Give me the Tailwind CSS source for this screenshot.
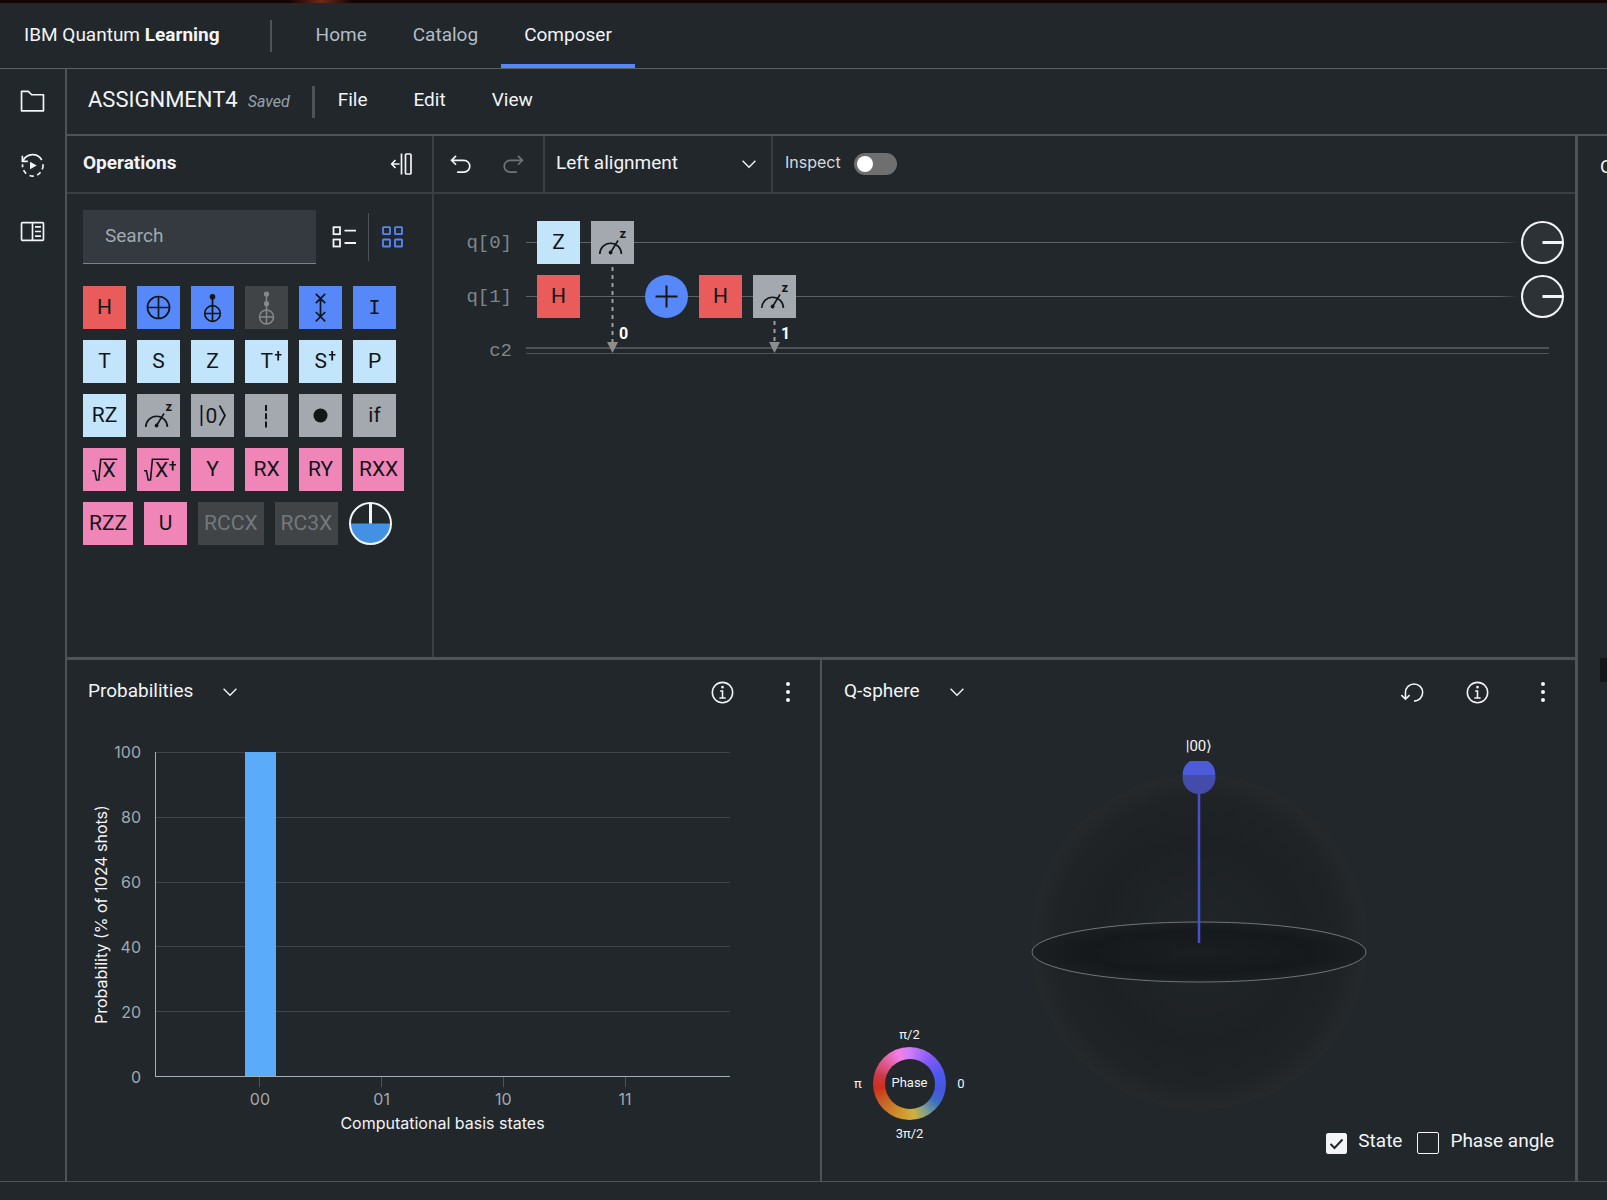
<!DOCTYPE html>
<html lang="en">
<head>
<meta charset="utf-8">
<meta name="viewport" content="width=device-width, initial-scale=1">
<title>IBM Quantum Learning - Composer</title>
<script src="https://cdn.jsdelivr.net/npm/@tailwindcss/browser@4"></script>
</head>
<body class="flex min-h-screen flex-col overflow-x-hidden bg-[#21272a] font-['Roboto',sans-serif] text-[19px] leading-6 text-[#f2f4f8]">

<!-- Shared icon and gate symbols -->
<svg class="hidden" aria-hidden="true">
  <symbol id="chevron" viewBox="0 0 16 16"><path fill="currentColor" d="M8 11 3 6l.7-.7L8 9.6l4.3-4.3.7.7z"/></symbol>
  <symbol id="info" viewBox="0 0 32 32"><path fill="currentColor" d="M17 22v-9h-4v2h2v7h-3v2h8v-2zM16 7.5a1.7 1.7 0 1 0 0 3.4 1.7 1.7 0 0 0 0-3.4z"/><circle cx="16" cy="16" r="13" fill="none" stroke="currentColor" stroke-width="2"/></symbol>
  <symbol id="dots" viewBox="0 0 22 22"><g fill="currentColor"><circle cx="11" cy="3" r="2"/><circle cx="11" cy="11" r="2"/><circle cx="11" cy="19" r="2"/></g></symbol>
  <symbol id="measure" viewBox="0 0 43 43"><g fill="none" stroke="#121619" stroke-width="1.6"><path d="M8.800 33a10.800 10.800 0 0 1 21.600 0M19.600 31.500 27 19.500"/></g><circle cx="19.600" cy="31.500" r="1.900" fill="#121619"/><text x="28.500" y="17" font-size="13" font-weight="700" fill="#121619">z</text></symbol>
  <symbol id="wheel" viewBox="0 0 43 43"><circle cx="21.500" cy="21.500" r="20.500" fill="#2c3236" stroke="#f2f4f8" stroke-width="2"/><path d="M21.500 21.500H41" stroke="#f2f4f8" stroke-width="3"/></symbol>
</svg>

<div class="h-1 border-b border-[#4a1512] bg-linear-to-r from-[#160504] from-18% via-[#6e2a1c] via-20% to-[#160504] to-22%"></div>

<header class="flex h-[65px] shrink-0 items-center border-b border-[#5a6165] pl-6">
  <a href="#" class="pb-0.5">IBM Quantum <b class="font-bold">Learning</b></a>
  <div class="ml-[50px] h-8 w-0.5 bg-[#4d5358]"></div>
  <nav class="ml-[21px] flex h-full text-[#b3bdc6]">
    <a href="#" class="px-[23px] pt-[19px]">Home</a>
    <a href="#" class="px-[23px] pt-[19px]">Catalog</a>
    <a href="#" aria-current="page" class="border-b-4 border-[#5688fa] px-[23px] pt-[19px] text-[#f2f4f8]">Composer</a>
  </nav>
</header>

<div class="flex flex-1 border-b border-[#4d5358]">
  <aside class="flex w-[67px] shrink-0 flex-col items-center gap-[37px] border-r-2 border-[#4d5358] pt-[19px]">
    <button aria-label="Files"><svg class="size-[27px]" viewBox="0 0 32 32"><path fill="none" stroke="#f2f4f8" stroke-width="2" stroke-linejoin="round" d="M3 4h8l4 4h14v19H3z"/></svg></button>
    <button aria-label="Jobs"><svg class="size-[27px]" viewBox="0 0 32 32"><g fill="none" stroke="#f2f4f8" stroke-width="2"><path d="M5 10a12.500 12.500 0 0 1 22-.500M4 4.500V11h6.500M28.500 14.500a12 12 0 0 1-1 6M25.500 24a12 12 0 0 1-4 3.300M17.500 28.500a12 12 0 0 1-5-.600M8.500 25.500a12 12 0 0 1-3-4M4.200 18v-3.500"/></g><path fill="#f2f4f8" d="M13 11.500v9l8-4.500z"/></svg></button>
    <button aria-label="Documentation" class="pt-0.5"><svg class="size-[27px]" viewBox="0 0 32 32"><g fill="none" stroke="#f2f4f8" stroke-width="2"><rect x="3" y="5.500" width="26" height="21" rx="1"/><path d="M16 5.500v21M19 10.500h7M19 16h7M19 21.500h7"/></g></svg></button>
  </aside>

  <main class="flex min-w-0 flex-1 flex-col">
    <div class="flex h-[67px] shrink-0 items-center border-b-2 border-[#4d5358] pl-[21px]">
      <h1 class="pb-1 text-[22px]">ASSIGNMENT4</h1>
      <span class="ml-2.5 text-base text-[#98a2aa] italic">Saved</span>
      <div class="ml-[22px] h-8 w-[3px] bg-[#4d5358]"></div>
      <button class="px-[23px] pb-1">File</button>
      <button class="px-[23px] pb-1">Edit</button>
      <button class="px-[23px] pb-1">View</button>
    </div>

    <div class="flex flex-1">
      <div class="grid min-w-0 flex-1 grid-rows-[524fr_521fr]">

        <div class="flex border-b-[3px] border-[#4d5358]">
          <!-- Operations palette -->
          <section class="w-[367px] shrink-0 border-r-2 border-[#393f43]">
            <div class="flex h-[58px] items-center justify-between border-b-2 border-[#393f43] pr-[18px] pl-4">
              <h2 class="pb-0.5 font-bold">Operations</h2>
              <button aria-label="Collapse operations"><svg class="size-6" viewBox="0 0 24 24"><g fill="none" stroke="#f2f4f8" stroke-width="1.700"><path d="M11.500 1.500v21M9.500 12H2M5.500 8 1.700 12l3.800 4"/><rect x="15.500" y="2" width="5.500" height="20" rx="1"/></g></svg></button>
            </div>
            <div class="flex items-center pt-4 pl-4">
              <input type="search" aria-label="Search operations" placeholder="Search" class="h-[54px] w-[233px] border-b border-[#7b8288] bg-[#343a3f] px-[22px] pb-0.5 placeholder:text-[#a2a9b0]">
              <button aria-label="List view" class="ml-4"><svg class="size-6" viewBox="0 0 24 24"><g fill="none" stroke="#f2f4f8" stroke-width="1.800"><rect x="1.500" y="2.200" width="6.500" height="7"/><rect x="1.500" y="14.500" width="6.500" height="7"/><path d="M12.500 5.700H24M12.500 18H24"/></g></svg></button>
              <div class="ml-3 h-12 w-px bg-[#4d5358]"></div>
              <button aria-label="Grid view" class="ml-3"><svg class="size-6" viewBox="0 0 24 24"><g fill="none" stroke="#5688fa" stroke-width="1.800"><rect x="2" y="2.200" width="7" height="7" rx=".6"/><rect x="2" y="14.500" width="7" height="7" rx=".6"/><rect x="14" y="2.200" width="7" height="7" rx=".6"/><rect x="14" y="14.500" width="7" height="7" rx=".6"/></g></svg></button>
            </div>
            <div class="flex flex-wrap gap-[11px] pt-[22px] pl-4 text-[21px] text-[#121619]">
              <button class="h-[43px] min-w-[43px] bg-[#e95c5b] px-1.5 pb-0.5">H</button>
              <button aria-label="NOT" class="size-[43px] bg-[#5688fa]"><svg viewBox="0 0 43 43"><g fill="none" stroke="#121619" stroke-width="1.700"><circle cx="21.500" cy="21.500" r="11"/><path d="M10.500 21.500h22M21.500 10.500v22"/></g></svg></button>
              <button aria-label="CNOT" class="size-[43px] bg-[#5688fa]"><svg viewBox="0 0 43 43"><g fill="none" stroke="#121619" stroke-width="1.700"><circle cx="21.500" cy="27.500" r="7.800"/><path d="M13.700 27.500h15.600M21.500 11v24.300"/></g><circle cx="21.500" cy="10.700" r="2.800" fill="#121619"/></svg></button>
              <button aria-label="Toffoli" disabled class="size-[43px] bg-[#404447]"><svg viewBox="0 0 43 43"><g fill="none" stroke="#85898b" stroke-width="1.500"><circle cx="21.500" cy="31" r="7"/><path d="M14.500 31h14M21.500 8v30"/></g><g fill="#85898b"><circle cx="21.500" cy="8" r="2.600"/><circle cx="21.500" cy="17.700" r="2.600"/></g></svg></button>
              <button aria-label="SWAP" class="size-[43px] bg-[#5688fa]"><svg viewBox="0 0 43 43"><path fill="none" stroke="#121619" stroke-width="1.700" d="M16.800 7.800l9.400 9.400M26.200 7.800l-9.400 9.400M16.800 26l9.400 9.400M26.200 26l-9.400 9.400M21.500 12.500v18"/></svg></button>
              <button class="h-[43px] min-w-[43px] bg-[#5688fa] px-1.5 pb-0.5 font-['DejaVu_Sans_Mono',monospace] text-[20px]">I</button>

              <button class="h-[43px] min-w-[43px] bg-[#c2e5fc] px-1.5 pb-0.5">T</button>
              <button class="h-[43px] min-w-[43px] bg-[#c2e5fc] px-1.5 pb-0.5">S</button>
              <button class="h-[43px] min-w-[43px] bg-[#c2e5fc] px-1.5 pb-0.5">Z</button>
              <button aria-label="T dagger" class="size-[43px] bg-[#c2e5fc]"><svg viewBox="0 0 43 43" fill="#121619"><text x="15.500" y="28" font-size="21">T</text><path d="M32.300 11h1.800v3h2.400v1.500h-2.400v5h-1.800v-5h-2.400V14h2.400z"/></svg></button>
              <button aria-label="S dagger" class="size-[43px] bg-[#c2e5fc]"><svg viewBox="0 0 43 43" fill="#121619"><text x="15.500" y="28" font-size="21">S</text><path d="M32.300 11h1.800v3h2.400v1.500h-2.400v5h-1.800v-5h-2.400V14h2.400z"/></svg></button>
              <button class="h-[43px] min-w-[43px] bg-[#c2e5fc] px-1.5 pb-0.5">P</button>

              <button class="h-[43px] min-w-[43px] bg-[#c2e5fc] px-1.5 pb-0.5">RZ</button>
              <button aria-label="Measurement" class="size-[43px] bg-[#a4a9b0]"><svg viewBox="0 0 43 43"><use href="#measure"/></svg></button>
              <button aria-label="Reset to zero" class="size-[43px] bg-[#a4a9b0]"><svg viewBox="0 0 43 43"><path fill="none" stroke="#121619" stroke-width="1.700" d="M10.500 11v21M28.500 11.500l5.500 10-5.500 10"/><text x="14.500" y="29" font-size="21" fill="#121619">0</text></svg></button>
              <button aria-label="Barrier" class="size-[43px] bg-[#a4a9b0]"><svg viewBox="0 0 43 43"><path stroke="#121619" stroke-width="2" stroke-dasharray="6 2.200" d="M21 11v22.500"/></svg></button>
              <button aria-label="Control modifier" class="size-[43px] bg-[#a4a9b0]"><svg viewBox="0 0 43 43"><circle cx="21.500" cy="21.500" r="7" fill="#121619"/></svg></button>
              <button class="h-[43px] min-w-[43px] bg-[#a4a9b0] px-1.5 pb-0.5">if</button>

              <button aria-label="Square root of X" class="size-[43px] bg-[#f086b7]"><svg viewBox="0 0 43 43"><path fill="none" stroke="#121619" stroke-width="1.600" d="M9.300 22.700h2.400L13.500 32h2.300l1.900-20.700h16.600"/><text x="19.500" y="29" font-size="21" fill="#121619">X</text></svg></button>
              <button aria-label="Square root of X dagger" class="size-[43px] bg-[#f086b7]"><svg viewBox="0 0 43 43"><path fill="none" stroke="#121619" stroke-width="1.600" d="M7 22.700h2.400L11.200 32h2.300l1.900-20.700h16.400"/><text x="18" y="29" font-size="21" fill="#121619">X</text><path fill="#121619" d="M34.800 13h1.800v3h2.400v1.500h-2.400v5h-1.800v-5h-2.400V16h2.400z"/></svg></button>
              <button class="h-[43px] min-w-[43px] bg-[#f086b7] px-1.5 pb-0.5">Y</button>
              <button class="h-[43px] min-w-[43px] bg-[#f086b7] px-1.5 pb-0.5">RX</button>
              <button class="h-[43px] min-w-[43px] bg-[#f086b7] px-1.5 pb-0.5">RY</button>
              <button class="h-[43px] min-w-[43px] bg-[#f086b7] px-1.5 pb-0.5">RXX</button>

              <button class="h-[43px] min-w-[43px] bg-[#f086b7] px-1.5 pb-0.5">RZZ</button>
              <button class="h-[43px] min-w-[43px] bg-[#f086b7] px-1.5 pb-0.5">U</button>
              <button disabled class="h-[43px] min-w-[43px] bg-[#404447] px-1.5 pb-0.5 text-[#74787b]">RCCX</button>
              <button disabled class="h-[43px] min-w-[43px] bg-[#404447] px-1.5 pb-0.5 text-[#74787b]">RC3X</button>
              <button aria-label="Phase disk" class="size-[43px]"><svg viewBox="0 0 43 43"><path fill="#4391e2" d="M1.500 21.500h40a20 20 0 0 1-40 0z"/><circle cx="21.500" cy="21.500" r="20.500" fill="none" stroke="#f2f4f8" stroke-width="2"/><path stroke="#f2f4f8" stroke-width="3" d="M21.500 1v20.500"/></svg></button>
            </div>
          </section>

          <!-- Circuit editor -->
          <section class="min-w-0 flex-1">
            <div class="flex h-[58px] border-b-2 border-[#393f43]">
              <div class="flex w-[111px] items-center gap-[26px] border-r-2 border-[#393f43] pl-[13px]">
                <button aria-label="Undo"><svg class="size-[27px]" viewBox="0 0 32 32"><path fill="#f2f4f8" d="M20 10H7.800l3.600-3.600L10 5l-6 6 6 6 1.400-1.400L7.800 12H20a6 6 0 0 1 0 12h-8v2h8a8 8 0 0 0 0-16z"/></svg></button>
                <button aria-label="Redo" disabled><svg class="size-[27px]" viewBox="0 0 32 32"><path fill="#6f7478" d="M12 10h12.200l-3.600-3.600L22 5l6 6-6 6-1.400-1.400 3.600-3.600H12a6 6 0 0 0 0 12h8v2h-8a8 8 0 0 1 0-16z"/></svg></button>
              </div>
              <div class="relative w-[228px] border-r-2 border-[#393f43]">
                <select aria-label="Alignment" class="size-full appearance-none bg-transparent pb-0.5 pl-[11px]"><option>Left alignment</option></select>
                <svg class="pointer-events-none absolute top-[17px] right-[11px] size-[22px]"><use href="#chevron"/></svg>
              </div>
              <div class="flex items-center gap-[13px] pl-3">
                <label for="inspect" class="pb-1 font-['Inter',sans-serif] text-base text-[#d5dadf]">Inspect</label>
                <input id="inspect" type="checkbox" role="switch" class="h-[22px] w-[43px] appearance-none rounded-full bg-[#6f6f6f] p-[3px] before:block before:size-4 before:rounded-full before:bg-white checked:before:ml-[21px]">
              </div>
            </div>

            <div class="flex flex-col gap-[11px] pt-[27px] pr-[11px]">
              <div class="flex items-center">
                <span class="w-[78px] text-right font-['Liberation_Mono',monospace] text-[#7d868d]">q[0]</span>
                <div class="relative ml-3.5 flex flex-1 gap-[11px] pl-[11px] text-[21px] text-[#121619]">
                  <div class="absolute inset-x-0 top-[21px] h-px bg-linear-to-r from-[#5b6165] from-98% to-transparent"></div>
                  <button class="relative size-[43px] bg-[#c2e5fc] pb-0.5">Z</button>
                  <div class="relative">
                    <button aria-label="Measure q[0]" class="block size-[43px] bg-[#a4a9b0]"><svg viewBox="0 0 43 43"><use href="#measure"/></svg></button>
                    <svg class="absolute top-full left-0 z-10 h-[89px] w-[43px]"><path stroke="#a0a0a0" stroke-width="2" stroke-dasharray="4 4" d="M21.500 3v76"/><path fill="#8d8d8d" d="M16 78h11l-5.500 11z"/><text x="28" y="75" font-size="16" font-weight="700" fill="#fff">0</text></svg>
                  </div>
                </div>
                <svg class="ml-[3px] size-[43px]"><use href="#wheel"/></svg>
              </div>
              <div class="flex items-center">
                <span class="w-[78px] text-right font-['Liberation_Mono',monospace] text-[#7d868d]">q[1]</span>
                <div class="relative ml-3.5 flex flex-1 gap-[11px] pl-[11px] text-[21px] text-[#121619]">
                  <div class="absolute inset-x-0 top-[21px] h-px bg-linear-to-r from-[#5b6165] from-98% to-transparent"></div>
                  <button class="relative size-[43px] bg-[#e95c5b] pb-0.5">H</button>
                  <div class="size-[43px]"></div>
                  <button aria-label="NOT q[1]" class="relative size-[43px] rounded-full bg-[#5688fa]"><svg viewBox="0 0 43 43"><path stroke="#121619" stroke-width="2" d="M10.500 21.500h22M21.500 10.500v22"/></svg></button>
                  <button class="relative size-[43px] bg-[#e95c5b] pb-0.5">H</button>
                  <div class="relative">
                    <button aria-label="Measure q[1]" class="block size-[43px] bg-[#a4a9b0]"><svg viewBox="0 0 43 43"><use href="#measure"/></svg></button>
                    <svg class="absolute top-full left-0 z-10 h-[35px] w-[43px]"><path stroke="#a0a0a0" stroke-width="2" stroke-dasharray="4 4" d="M21.500 3v22"/><path fill="#8d8d8d" d="M16 24h11l-5.500 11z"/><text x="28" y="21" font-size="16" font-weight="700" fill="#fff">1</text></svg>
                  </div>
                </div>
                <svg class="ml-[3px] size-[43px]"><use href="#wheel"/></svg>
              </div>
              <div class="flex h-[43px] items-center pr-[15px]">
                <span class="w-[78px] text-right font-['Liberation_Mono',monospace] text-[#7d868d]">c2</span>
                <div class="ml-3.5 h-[7px] flex-1 border-t-2 border-b border-[#4d5358]"></div>
              </div>
            </div>
          </section>
        </div>

        <div class="grid grid-cols-[755fr_753fr]">
          <!-- Probabilities chart -->
          <section class="flex flex-col border-r-2 border-[#4d5358]">
            <div class="flex h-16 items-center">
              <button class="flex flex-1 items-center gap-[26px] pl-[21px]"><span class="pb-0.5">Probabilities</span><svg class="size-[22px]"><use href="#chevron"/></svg></button>
              <button aria-label="About probabilities" class="flex w-[65px] justify-center"><svg class="size-[25px]"><use href="#info"/></svg></button>
              <button aria-label="Probabilities menu" class="flex w-[65px] justify-center"><svg class="size-[22px]"><use href="#dots"/></svg></button>
            </div>
            <div class="mt-7 flex flex-1 pr-[90px] pl-6 font-['Inter',sans-serif] text-base leading-5">
              <div class="flex w-5 rotate-180 items-center justify-center whitespace-nowrap [writing-mode:vertical-rl]">Probability (% of 1024 shots)</div>
              <div class="-my-2.5 flex w-[30px] flex-col justify-between text-right text-[#a2a9b0]">
                <span>100</span><span>80</span><span>60</span><span>40</span><span>20</span><span>0</span>
              </div>
              <div class="relative ml-3.5 flex-1 border-b border-l border-[#a2b0b8]">
                <div class="absolute inset-0 grid grid-rows-5">
                  <div class="border-t border-[#3f4549]"></div><div class="border-t border-[#3f4549]"></div><div class="border-t border-[#3f4549]"></div><div class="border-t border-[#3f4549]"></div><div class="border-t border-[#3f4549]"></div>
                </div>
                <div class="relative grid h-full grid-cols-4 items-end justify-items-center px-11">
                  <div class="w-[31px] bg-[#5aacf8]" style="height:100%"></div><div class="w-[31px]" style="height:0"></div><div class="w-[31px]" style="height:0"></div><div class="w-[31px]" style="height:0"></div>
                </div>
              </div>
            </div>
            <div class="h-[104px] pr-[90px] pl-[88px] text-center font-['Inter',sans-serif] text-base leading-6">
              <div class="grid grid-cols-4 justify-items-center px-11 text-[#a2a9b0]">
                <div><div class="mx-auto h-2.5 w-px bg-[#4d5358]"></div>00</div>
                <div><div class="mx-auto h-2.5 w-px bg-[#4d5358]"></div>01</div>
                <div><div class="mx-auto h-2.5 w-px bg-[#4d5358]"></div>10</div>
                <div><div class="mx-auto h-2.5 w-px bg-[#4d5358]"></div>11</div>
              </div>
              <div>Computational basis states</div>
            </div>
          </section>

          <!-- Q-sphere -->
          <section class="relative flex flex-col">
            <div class="flex h-16 items-center">
              <button class="flex flex-1 items-center gap-[26px] pl-[22px]"><span class="pb-0.5">Q-sphere</span><svg class="size-[22px]"><use href="#chevron"/></svg></button>
              <button aria-label="Reset view" class="flex w-[65px] justify-center"><svg class="size-[25px]" viewBox="0 0 32 32"><path fill="#f2f4f8" d="M18 28A12 12 0 1 0 6 16v6.200l-3.600-3.600L1 20l6 6 6-6-1.400-1.400L8 22.200V16a10 10 0 1 1 10 10z"/></svg></button>
              <button aria-label="About Q-sphere" class="flex w-[65px] justify-center"><svg class="size-[25px]"><use href="#info"/></svg></button>
              <button aria-label="Q-sphere menu" class="flex w-[65px] justify-center"><svg class="size-[22px]"><use href="#dots"/></svg></button>
            </div>
            <svg class="mx-auto h-[396px] w-[340px]" viewBox="0 0 340 396" role="img" aria-label="Q-sphere with state 00 at the north pole">
              <defs>
                <radialGradient id="ball"><stop offset="0" stop-color="#212629"/><stop offset=".6" stop-color="#1d2123"/><stop offset=".85" stop-color="#1f2325"/><stop offset="1" stop-color="#26292b"/></radialGradient>
                <radialGradient id="disc"><stop offset="0" stop-color="#1a1e20"/><stop offset=".7" stop-color="#15191b"/><stop offset="1" stop-color="#1b1f21"/></radialGradient>
              </defs>
              <circle cx="170" cy="218" r="167.500" fill="url(#ball)"/>
              <ellipse cx="170" cy="228" rx="167" ry="30" fill="url(#disc)" stroke="#6f7679" stroke-width="1"/>
              <path stroke="#4650d2" stroke-width="2.500" d="M170 66v153"/>
              <path fill="#4b5bd9" d="M153.700 51a16.500 16.500 0 0 1 7.300-14h18a16.500 16.500 0 0 1 7.300 14z"/>
              <path fill="#434ca8" d="M153.700 51h32.600a16.500 16.500 0 1 1-32.600 0z"/>
              <text x="170" y="27" text-anchor="middle" font-size="15" fill="#f2f4f8">|00⟩</text>
            </svg>
            <div class="absolute bottom-[37px] left-[25px] grid grid-cols-[22px_73px_22px] items-center justify-items-center gap-x-1 text-[13px] leading-5">
              <span class="col-span-3 pb-0.5">π/2</span>
              <span>π</span>
              <div class="grid size-[73px] place-items-center rounded-full bg-[conic-gradient(#d07ef8,#8258f8_40deg,#4a58ec_75deg,#4557dd_105deg,#3a70c0_125deg,#80a090_150deg,#d0b038_172deg,#cd8a2e_205deg,#c85a22_240deg,#cf301c_262deg,#cc3a48_285deg,#e05c98_312deg,#f47ee6_340deg,#d07ef8)]">
                <div class="grid size-[50px] place-items-center rounded-full bg-[#21272a] pb-0.5">Phase</div>
              </div>
              <span>0</span>
              <span class="col-span-3 pt-1">3π/2</span>
            </div>
            <div class="mt-auto flex items-center justify-end gap-[11px] pr-[21px] pb-6">
              <div class="relative size-[21px]">
                <input id="state" type="checkbox" checked class="peer block size-[21px] appearance-none rounded-[2px] border border-[#f2f4f8] checked:bg-[#f2f4f8]">
                <svg class="pointer-events-none absolute inset-0 hidden size-[21px] peer-checked:block" viewBox="0 0 21 21"><path fill="none" stroke="#21272a" stroke-width="2" d="M4.500 11l4 4 8-8.500"/></svg>
              </div>
              <label for="state" class="pb-1">State</label>
              <input id="angle" type="checkbox" class="ml-1 size-[22px] appearance-none rounded-[2px] border border-[#f2f4f8] checked:bg-[#f2f4f8]">
              <label for="angle" class="pb-1">Phase angle</label>
            </div>
          </section>
        </div>
      </div>

      <!-- Code panel, cut off by the window's edge -->
      <aside class="flex w-8 shrink-0 flex-col overflow-hidden border-l-[3px] border-[#4d5358] pt-[19px] pl-[22px] whitespace-nowrap">
        <span>OpenQASM 2.0</span>
        <div class="mt-[479px] h-6 w-40 bg-[#121619]"></div>
      </aside>
    </div>
  </main>
</div>
<footer class="h-[18px] shrink-0"></footer>
</body>
</html>
